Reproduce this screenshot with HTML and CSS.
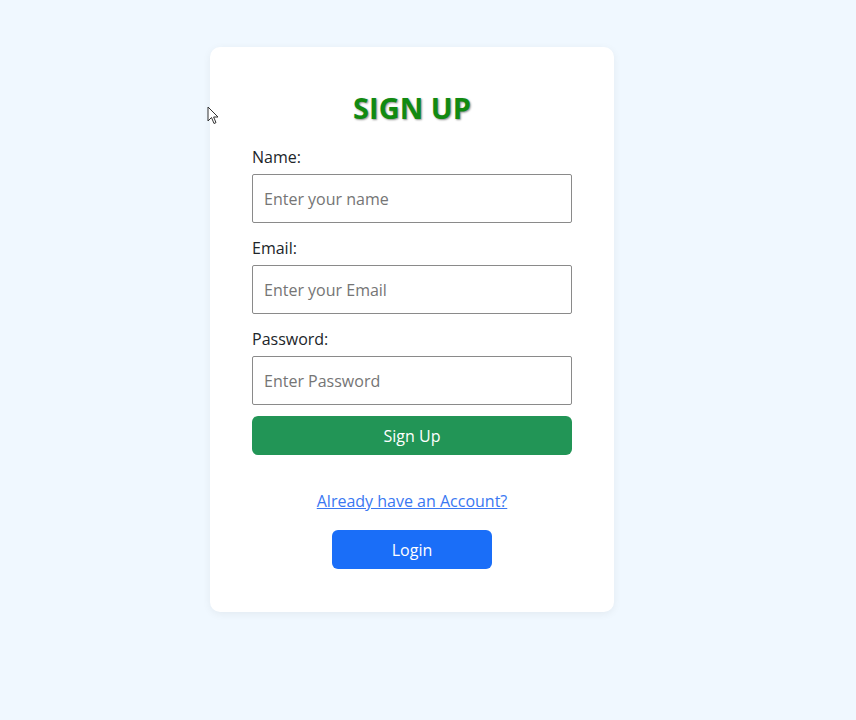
FILE: index.html
```html
<!DOCTYPE html>
<html lang="en">
<head>
<meta charset="utf-8">
<title>Sign Up</title>
<link rel="stylesheet" href="styles.css">
</head>
<body>
<main class="page">
  <form class="card">
    <h2 class="title">SIGN UP</h2>
    <label class="label" for="name">Name:</label>
    <input class="field" id="name" type="text" placeholder="Enter your name">
    <label class="label" for="email">Email:</label>
    <input class="field" id="email" type="email" placeholder="Enter your Email">
    <label class="label" for="pw">Password:</label>
    <input class="field" id="pw" type="password" placeholder="Enter Password">
    <button class="btn btn-signup" type="button">Sign Up</button>
    <a class="link" href="#">Already have an Account?</a>
    <button class="btn btn-login" type="button">Login</button>
  </form>
</main>
<svg class="cursor" width="12" height="19" viewBox="0 0 12 19"><path d="M1 1 L1 15 L4.5 11.5 L7 17.5 L9 16.6 L6.6 11 L11 11 Z" fill="#fff" stroke="#333" stroke-width="1" stroke-linejoin="round"/></svg>
</body>
</html>
```
FILE: styles.css
```css
html, body {
  margin: 0;
  padding: 0;
}
body {
  background: #f0f8ff;
  font-family: "Open Sans", "Noto Sans", sans-serif;
  color: #212529;
  min-height: 720px;
}
.page {
  display: flex;
  justify-content: center;
  padding-top: 47px;
  padding-right: 32px;
}
.card {
  width: 320px;
  padding: 42px 42px 43px;
  background: #fff;
  border-radius: 10px;
  box-shadow: 0 2px 8px rgba(0, 0, 0, 0.06);
  display: flex;
  flex-direction: column;
}
.title {
  margin: 0 0 18px;
  text-align: center;
  font-size: 29px;
  line-height: 38px;
  font-weight: 700;
  color: #118a11;
  text-shadow: 1px 1px 2px rgba(0, 0, 0, 0.45);
}
.label {
  font-size: 16px;
  line-height: 24px;
  margin-bottom: 5px;
}
.field {
  box-sizing: border-box;
  height: 49px;
  width: 100%;
  margin: 0 0 13px;
  padding: 0 11px;
  border: 1px solid #8a8a8a;
  border-radius: 2px;
  font-family: inherit;
  font-size: 16px;
  color: #212529;
}
.field::placeholder {
  color: #757575;
}
.field:last-of-type {
  margin-bottom: 11px;
}
.btn {
  box-sizing: border-box;
  height: 39px;
  border: none;
  border-radius: 6px;
  color: #fff;
  font-family: inherit;
  font-size: 16px;
}
.btn-signup {
  width: 100%;
  background: #229556;
}
.link {
  align-self: center;
  margin-top: 34px;
  font-size: 16px;
  line-height: 24px;
  color: #3a78f2;
}
.btn-login {
  align-self: center;
  width: 160px;
  margin-top: 17px;
  background: #1a6ef8;
}
.cursor {
  position: absolute;
  left: 207px;
  top: 106px;
}
```
